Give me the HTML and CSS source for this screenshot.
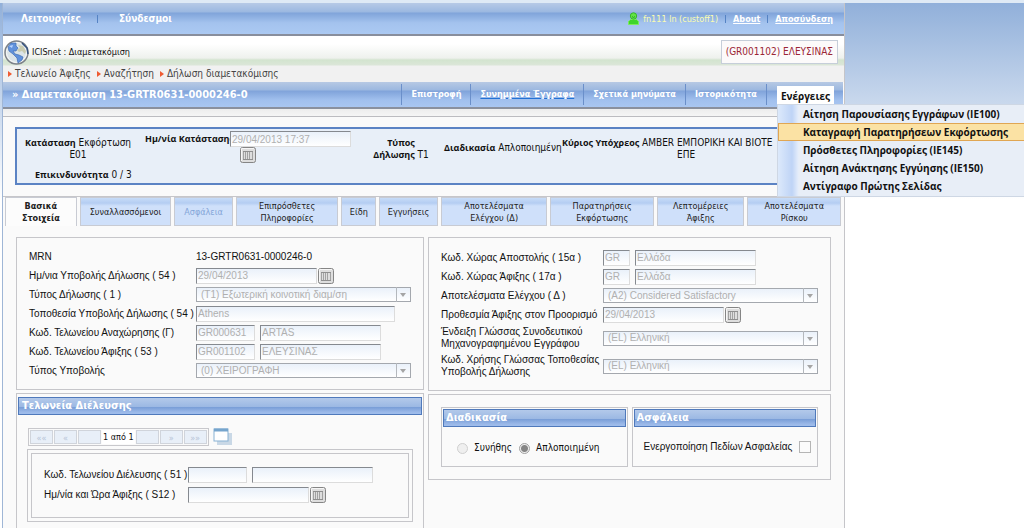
FILE: index.html
```html
<!DOCTYPE html>
<html lang="el">
<head>
<meta charset="utf-8">
<title>ICISnet : Διαμετακόμιση</title>
<link rel="stylesheet" href="styles.css">
</head>
<body>
<svg class="defs" width="0" height="0" aria-hidden="true">
  <symbol id="calendar" viewBox="0 0 16 16">
    <rect x="0.5" y="0.5" width="15" height="15" rx="2" fill="#dedede" stroke="#858585"/>
    <path d="M1.5 14V1.5H14" fill="none" stroke="#f6f6f6"/>
    <path d="M3 4.5H13M3 12.5H13" stroke="#8f8f8f"/>
    <path d="M3.5 5V12M5.5 5V12M7.5 5V12M9.5 5V12M12.5 5V12" stroke="#a2a2a2"/>
  </symbol>
</svg>
<div class="shell">
  <header class="top">
    <nav class="top-menu">
      <a href="#">Λειτουργίες</a><span class="bar"></span><a href="#">Σύνδεσμοι</a>
    </nav>
    <div class="user">
      <svg width="11" height="13" viewBox="0 0 11 13"><path d="M0.5 12.5V9.500L2.500 7.500H8.500L10.500 9.500V12.500Z" fill="#3fd52c" stroke="#7cec5c"/><circle cx="5.500" cy="4" r="3.200" fill="#63e346" stroke="#35b82c"/><path d="M4 4.500L5.500 5.500L7 4.500" fill="none" stroke="#2aa52a"/></svg>
      <span class="user-name">fn111 ln (custoff1)</span><span class="bar"></span><a href="#">About</a><span class="bar"></span><a href="#">Αποσύνδεση</a>
    </div>
  </header>
  <div class="app">
    <svg class="globe" width="25" height="25" viewBox="0 0 25 25"><circle cx="12.500" cy="12.500" r="11.500" fill="#e4e8e6" stroke="#7d8289" stroke-width="1.500"/><circle cx="12.500" cy="12.500" r="10" fill="#dbe4e8" stroke="#f7f7f7"/><path d="M4 7L7 3L12 3L12 6L14 8L12 11L9 11L11 14L15 15L19 17L18 20L14 23L13 18L9 14L5 11Z" fill="#6192dc" stroke="#416fb4" stroke-width=".7"/><path d="M14 5L19 6L22 11L21 14L18 11L15 12L13 10L16 8Z" fill="#c9cbb0"/><path d="M18 3L23 8L24 14" fill="none" stroke="#34527f" stroke-width="1.500"/><path d="M5 6L9 5L8 8Z" fill="#b8d4ff"/></svg>
    <h1>ICISnet : Διαμετακόμιση</h1>
    <div class="office">(GR001102) ΕΛΕΥΣΙΝΑΣ</div>
  </div>
  <nav class="crumbs">
    <a href="#">Τελωνείο Άφιξης</a><a href="#">Αναζήτηση</a><a href="#">Δήλωση διαμετακόμισης</a>
  </nav>
  <div class="toolbar">
    <h2>» Διαμετακόμιση 13-GRTR0631-0000246-0</h2>
    <nav class="tools">
      <a href="#">Επιστροφή</a><a href="#" class="hot">Συνημμένα Έγγραφα</a><a href="#">Σχετικά μηνύματα</a><a href="#">Ιστορικότητα</a>
      <div class="actions">
        <button type="button" class="actions-button">Ενέργειες</button>
        <div class="menu">
          <button type="button">Αίτηση Παρουσίασης Εγγράφων (IE100)</button>
          <button type="button" class="selected">Καταγραφή Παρατηρήσεων Εκφόρτωσης</button>
          <button type="button">Πρόσθετες Πληροφορίες (IE145)</button>
          <button type="button">Αίτηση Ανάκτησης Εγγύησης (IE150)</button>
          <button type="button">Αντίγραφο Πρώτης Σελίδας</button>
        </div>
      </div>
    </nav>
  </div>
  <div class="status-wrap">
    <section class="status">
      <div class="state"><b>Κατάσταση</b> Εκφόρτωση<br>Ε01</div>
      <div class="state-date">
        <label for="sdate">Ημ/νία Κατάστασης</label>
        <div><input id="sdate" type="text" value="29/04/2013 17:37" disabled><button type="button" class="cal" aria-label="Ημερολόγιο"><svg><use href="#calendar"/></svg></button></div>
      </div>
      <div class="kind"><b>Τύπος</b><br><b>Δήλωσης</b> T1</div>
      <div class="process"><b>Διαδικασία</b> Απλοποιημένη</div>
      <div class="principal"><b>Κύριος Υπόχρεος</b> AMBER ΕΜΠΟΡΙΚΗ ΚΑΙ ΒΙΟΤΕ<span>ΕΠΕ</span></div>
      <div class="risk"><b>Επικινδυνότητα</b> 0 / 3</div>
    </section>
  </div>
  <div class="tabs">
    <button type="button" class="active">Βασικά<br>Στοιχεία</button>
    <button type="button">Συναλλασσόμενοι</button>
    <button type="button" class="dim">Ασφάλεια</button>
    <button type="button">Επιπρόσθετες<br>Πληροφορίες</button>
    <button type="button">Είδη</button>
    <button type="button">Εγγυήσεις</button>
    <button type="button">Αποτελέσματα<br>Ελέγχου (Δ)</button>
    <button type="button">Παρατηρήσεις<br>Εκφόρτωσης</button>
    <button type="button">Λεπτομέρειες<br>Άφιξης</button>
    <button type="button">Αποτελέσματα<br>Ρίσκου</button>
  </div>
  <main class="content">
    <div class="column">
      <section class="panel basic">
        <div class="row"><span>MRN</span><div>13-GRTR0631-0000246-0</div></div>
        <div class="row"><label for="d54">Ημ/νια Υποβολής Δήλωσης ( 54 )</label><div><input id="d54" class="medium" type="text" value="29/04/2013" disabled><button type="button" class="cal" aria-label="Ημερολόγιο"><svg><use href="#calendar"/></svg></button></div></div>
        <div class="row"><label for="t1">Τύπος Δήλωσης ( 1 )</label><div class="select"><select id="t1" disabled><option>(T1) Εξωτερική κοινοτική διαμ/ση</option></select></div></div>
        <div class="row"><label for="p54">Τοποθεσία Υποβολής Δήλωσης ( 54 )</label><div><input id="p54" class="long" type="text" value="Athens" disabled></div></div>
        <div class="row"><label for="dep">Κωδ. Τελωνείου Αναχώρησης (Γ)</label><div><input id="dep" class="code" type="text" value="GR000631" disabled><input class="medium" type="text" aria-label="Τελωνείο Αναχώρησης" value="ARTAS" disabled></div></div>
        <div class="row"><label for="arr">Κωδ. Τελωνείου Άφιξης ( 53 )</label><div><input id="arr" class="code" type="text" value="GR001102" disabled><input class="medium" type="text" aria-label="Τελωνείο Άφιξης" value="ΕΛΕΥΣΙΝΑΣ" disabled></div></div>
        <div class="row"><label for="sub">Τύπος Υποβολής</label><div class="select"><select id="sub" disabled><option>(0) ΧΕΙΡΟΓΡΑΦΗ</option></select></div></div>
      </section>
      <section class="panel transit">
        <h3>Τελωνεία Διέλευσης</h3>
        <div class="pager">
          <div class="pages"><button type="button" disabled>««</button><button type="button" disabled>«</button><button type="button" disabled aria-label="Πίσω"></button><span>1 από 1</span><button type="button" disabled aria-label="Εμπρός"></button><button type="button" disabled>»</button><button type="button" disabled>»»</button></div>
          <svg width="20" height="18" viewBox="0 0 20 18"><rect x="4" y="5" width="15" height="12" fill="#c9d8e6"/><rect x="1" y="1" width="14" height="12" fill="#fff" stroke="#88b1d3"/><path d="M1 2H15" stroke="#76a5cd" stroke-width="3"/></svg>
        </div>
        <div class="double">
          <div class="inner">
            <div class="row"><label for="s1">Κωδ. Τελωνείου Διέλευσης ( 51 )</label><div><input id="s1" class="code" type="text"><input class="medium" type="text" aria-label="Τελωνείο Διέλευσης"></div></div>
            <div class="row"><label for="s12">Ημ/νία και Ώρα Άφιξης ( S12 )</label><div><input id="s12" class="medium" type="text"><button type="button" class="cal" aria-label="Ημερολόγιο"><svg><use href="#calendar"/></svg></button></div></div>
          </div>
        </div>
      </section>
    </div>
    <div class="column">
      <section class="panel countries">
        <div class="row"><label for="c15">Κωδ. Χώρας Αποστολής ( 15α )</label><div><input id="c15" class="short" type="text" value="GR" disabled><input class="medium" type="text" aria-label="Χώρα Αποστολής" value="Ελλάδα" disabled></div></div>
        <div class="row"><label for="c17">Κωδ. Χώρας Άφιξης ( 17α )</label><div><input id="c17" class="short" type="text" value="GR" disabled><input class="medium" type="text" aria-label="Χώρα Άφιξης" value="Ελλάδα" disabled></div></div>
        <div class="row"><label for="res">Αποτελέσματα Ελέγχου ( Δ )</label><div class="select"><select id="res" disabled><option>(A2) Considered Satisfactory</option></select></div></div>
        <div class="row"><label for="lim">Προθεσμία Άφιξης στον Προορισμό</label><div><input id="lim" class="medium" type="text" value="29/04/2013" disabled><button type="button" class="cal" aria-label="Ημερολόγιο"><svg><use href="#calendar"/></svg></button></div></div>
        <div class="row tall"><label for="l1">Ένδειξη Γλώσσας Συνοδευτικού<br>Μηχανογραφημένου Εγγράφου</label><div class="select"><select id="l1" disabled><option>(EL) Ελληνική</option></select></div></div>
        <div class="row tall"><label for="l2">Κωδ. Χρήσης Γλώσσας Τοποθεσίας<br>Υποβολής Δήλωσης</label><div class="select"><select id="l2" disabled><option>(EL) Ελληνική</option></select></div></div>
      </section>
      <section class="panel pair">
        <div class="box">
          <h4>Διαδικασία</h4>
          <div class="choices"><input id="r1" type="radio" name="proc" disabled><label for="r1">Συνήθης</label><input id="r2" type="radio" name="proc" checked disabled><label for="r2">Απλοποιημένη</label></div>
        </div>
        <div class="box">
          <h4>Ασφάλεια</h4>
          <div class="check"><label for="sec">Ενεργοποίηση Πεδίων Ασφαλείας</label><input id="sec" type="checkbox" disabled></div>
        </div>
      </section>
    </div>
  </main>
</div>
</body>
</html>
```
FILE: styles.css
```css
* { box-sizing: border-box; }
body {
  margin: 0;
  min-height: 100vh;
  padding: 3px 179px 0 2px;
  color: #111;
  background: linear-gradient(#dfeaf5 3px, #91b0da 3px, #fff 200px) no-repeat #fff;
  font: 10px/12px "DejaVu Sans Condensed", "DejaVu Sans", sans-serif;
}
h1, h2, h3, h4 { margin: 0; }
button, input, select { margin: 0; font: inherit; color: inherit; }
button { padding: 0; border: 0; background: none; }
.defs { position: absolute; }
.shell {
  display: flex;
  flex-direction: column;
  min-height: calc(100vh - 3px);
  background: #fafafa;
  border-left: 1px solid #9fb6d6;
  border-right: 1px solid #c5c5c9;
}
.top {
  display: flex;
  justify-content: space-between;
  height: 33px;
  padding: 0 11px 0 18px;
  color: #fff;
  border-bottom: 2px solid #888e9c;
  background: linear-gradient(#b7cae6, #9bb8e1 9px, #80a4da 10px, #a4c3ee 20px, #abc9f2);
}
.top a { color: #fff; font-weight: bold; }
.top-menu, .user { display: flex; align-items: center; }
.top-menu a { text-decoration: none; }
.bar { width: 1px; height: 8px; background: #5583c4; }
.top-menu .bar { margin: 0 21px 0 16px; }
.user { font-size: 9px; }
.user-name { margin-left: 4px; color: #fafcb0; }
.user .bar { margin: 0 7px; }
.app {
  display: flex;
  align-items: center;
  height: 30px;
  padding: 2px 6px 0 1px;
  background: linear-gradient(#fff 8px, #eef1ed 22px, #d3e4cf 24px, #dbe6d8 29px, #f1f1f1);
}
.app h1 { margin-left: 3px; font: 9px/12px "DejaVu Sans Condensed", "DejaVu Sans", sans-serif; flex: 1; }
.office {
  padding: 5px 4px;
  color: #9b2635;
  background: #fcfafa;
  border: 1px solid #c6ced9;
}
.crumbs {
  display: flex;
  gap: 6px;
  height: 16px;
  padding: 2px 5px;
  background: #f1f1f1;
}
.crumbs a {
  display: flex;
  align-items: center;
  gap: 3px;
  color: #444;
  text-decoration: none;
}
.crumbs a::before { content: ""; border: 3px solid transparent; border-left: 4px solid #ef5b32; border-right: 0; }
.toolbar {
  display: flex;
  align-items: center;
  justify-content: space-between;
  height: 27px;
  margin-right: 1px;
  padding: 0 9px;
  color: #fff;
  border-bottom: 2px solid #8a909e;
  background: linear-gradient(#b7c9e4, #9cb8e0 8px, #80a3da 9px, #a1c0ee 18px, #a9c6f1);
}
.toolbar h2 { font: bold 11px/14px "DejaVu Sans Condensed", "DejaVu Sans", sans-serif; }
.tools { display: flex; height: 21px; }
.tools > a {
  padding: 0 9px;
  line-height: 20px;
  color: #fff;
  text-decoration: none;
  font-size: 9px;
  font-weight: bold;
  border-left: 1px solid #6a8fca;
}
.tools > .hot { text-decoration: underline; text-decoration-color: #2372d6; }
.actions { position: relative; padding: 2px 0 0 10px; border-left: 1px solid #6a8fca; }
.actions-button, .menu { font-family: "Open Sans", "Noto Sans", sans-serif; }
.actions-button { height: 19px; padding: 0 4px; background: #fff; color: #111; font-weight: bold; }
.menu {
  position: absolute;
  z-index: 2;
  top: 20px;
  left: 10px;
  width: 250px;
  padding: 0 0 1px;
  color: #111;
  border: 1px solid #ced7e4;
  background: linear-gradient(90deg, #dce9fb, #bfd4f6 14px, #e3ecfa 20px, #e8eef7 21px);
}
.menu button {
  display: block;
  width: 100%;
  height: 18px;
  padding-left: 25px;
  text-align: left;
  font-weight: bold;
  white-space: nowrap;
}
.menu .selected { padding-left: 24px; border: 1px solid #e0a653; background: #fbe2a4; }
.status-wrap { padding: 18px 9px 11px 12px; background: linear-gradient(#ededed, #f5f5f5 7px, #bcbcc0 7px, #bcbcc0 8px, #fafafa 8px); }
.status {
  display: grid;
  grid-template-columns: 116px 225px 82px 115px 1fr;
  grid-template-rows: 38px 1fr;
  height: 58px;
  padding: 2px 0 0;
  text-align: center;
  white-space: nowrap;
  background: #e8eff8;
  border: 2px solid #5b83c4;
}
.status b, .status label { font: bold 9px/12px "Open Sans", "Noto Sans", sans-serif; }
.state { padding: 6px 0 0 6px; }
.state-date { display: flex; gap: 2px; padding-left: 12px; }
.state-date label { width: 83px; padding-top: 2px; }
.state-date div { width: 121px; text-align: left; }
.state-date input { width: 121px; }
.state-date .cal { display: block; margin-left: 10px; }
.kind { padding: 6px 0 0 4px; }
.process { padding: 11px 0 0 4px; text-align: left; }
.principal { padding: 6px 0 0 7px; text-align: left; }
.principal span { display: block; padding-left: 115px; }
.risk { padding-left: 18px; text-align: left; }
.tabs {
  display: grid;
  grid-template-columns: 72fr 92fr 59fr 103fr 35fr 59fr 107fr 104fr 88fr 94fr;
  gap: 3px;
  height: 30px;
  padding: 0 3px 0 2px;
  border-top: 1px solid #c6c6ca;
}
.tabs button {
  white-space: nowrap;
  color: #222;
  font-size: 9px;
  border: 1px solid #c8cbd3;
  background: linear-gradient(#c7dcf8, #b4cdf2 5px, #cfe0fa 8px, #cfe0fa);
}
.tabs .active { background: #fcfcfc; font-weight: bold; border-bottom: 0; }
.tabs .dim { color: #83a5d8; }
.content {
  flex: 1;
  display: grid;
  grid-template-columns: 408fr 403fr;
  gap: 4px;
  padding: 11px 13px 0 13px;
  font: 10px/12px "Liberation Sans", sans-serif;
}
.column { display: flex; flex-direction: column; gap: 3px; }
.panel { border: 1px solid #c6c6ca; background: #fafafa; }
.basic { padding: 9px 12px; }
.countries { padding: 10px 12px; }
.row { display: grid; grid-template-columns: 167px 1fr; align-items: center; height: 19px; }
.countries .row { grid-template-columns: 162px 1fr; }
.countries .tall { height: 28px; }
.row > * { white-space: nowrap; }
.row > div { display: flex; align-items: center; gap: 5px; }
.row > div:has(.cal) { gap: 1px; }
input[type="text"] {
  height: 16px;
  padding: 0 1px;
  color: #b0b0b0;
  font: 10px/12px "Liberation Sans", sans-serif;
  border: 1px solid #dcdcdc;
  border-top-color: #85898f;
  border-left-color: #85898f;
  background: linear-gradient(#eaf1fa, #fff);
}
.short { width: 27px; }
.code { width: 59px; }
.medium { width: 121px; }
.long { width: 199px; }
.cal { width: 16px; height: 16px; }
.cal svg { display: block; width: 16px; height: 16px; }
.select { position: relative; width: 215px; }
select {
  appearance: none;
  width: 100%;
  height: 15px;
  padding: 0 16px 0 4px;
  color: #b0b0b0;
  opacity: 1;
  border: 1px solid #a4a8ae;
  border-radius: 0;
  background: linear-gradient(#eaf1fa, #fff);
}
.select::after {
  content: "";
  position: absolute;
  right: 5px;
  top: 6px;
  border: 3px solid transparent;
  border-top: 4px solid #a5a5a5;
  border-bottom: 0;
}
.select::before {
  content: "";
  position: absolute;
  right: 14px;
  top: 0;
  width: 1px;
  height: 15px;
  background: #b4b8bd;
}
.transit { flex: 1; padding: 3px 1px 1px; border-bottom: 0; }
h3, h4 {
  color: #fff;
  border: 1px solid #4f79bb;
  background: linear-gradient(#b3c9ea, #9bb8e3 9px, #779cd6 9px, #9ab8e8 14px, #9fbdec);
  font: bold 11px/16px "DejaVu Sans Condensed", "DejaVu Sans", sans-serif;
}
h3 { padding-left: 3px; }
h4 { padding-left: 2px; }
.pager { display: flex; gap: 4px; padding: 13px 10px 3px; }
.pages {
  display: flex;
  gap: 1px;
  padding: 1px;
  border: 1px solid #c8c8cc;
  font: 9px/14px "DejaVu Sans Condensed", sans-serif;
}
.pages button { width: 23px; height: 14px; color: #b7c4d7; background: #e8eff8; border: 1px solid #d0d4db; }
.pages span { padding: 0 1px; background: #fff; }
.double { margin: 0 9px; padding: 3px; border: 1px solid #c6c6ca; }
.inner { padding: 11px 12px 12px; border: 1px solid #c6c6ca; }
.inner .row { grid-template-columns: 144px 1fr; height: 20px; }
.pair { display: grid; grid-template-columns: minmax(0, 1fr) minmax(0, 1fr); gap: 4px; padding: 12px; }
.box { height: 60px; padding: 1px; border: 1px solid #c6c6ca; }
.choices, .check { display: flex; align-items: center; white-space: nowrap; }
.choices { padding: 15px 0 0 14px; font: 10px/12px "DejaVu Sans Condensed", "DejaVu Sans", sans-serif; }
.choices label { margin: 0 7px 0 6px; }
.check { padding: 14px 0 0 10px; gap: 7px; }
input[type="radio"] { appearance: none; width: 11px; height: 11px; border: 1px solid #cfcfcf; border-radius: 50%; background: #efefef; }
input[type="radio"]:checked { border-color: #a0a0a0; background: radial-gradient(#858585 3px, #efefef 4px); }
input[type="checkbox"] { appearance: none; width: 12px; height: 12px; border: 1px solid #b5b5b5; background: #fbfbfb; }
```
